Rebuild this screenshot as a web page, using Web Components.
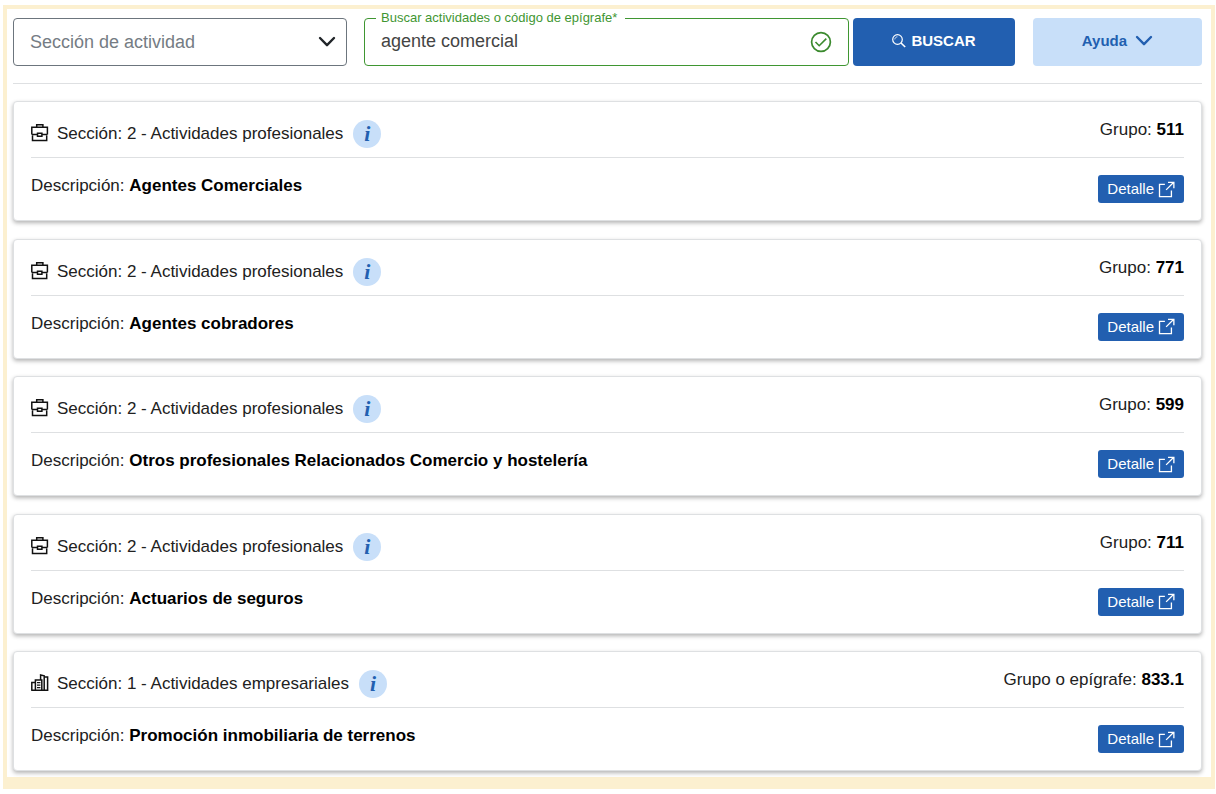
<!DOCTYPE html>
<html lang="es">
<head>
<meta charset="utf-8">
<title>Buscador de actividades</title>
<style>
  body { margin: 0; background: #fff; color: #212121; font: 17px/20px "Liberation Sans", Arial, sans-serif; }
</style>
</head>
<body>
<activity-finder>
  <search-bar slot="search"></search-bar>
  <activity-card kind="briefcase"><span slot="section">Sección: 2 - Actividades profesionales</span><span slot="label">Grupo:</span><b slot="group">511</b><b slot="description">Agentes Comerciales</b></activity-card>
  <activity-card kind="briefcase"><span slot="section">Sección: 2 - Actividades profesionales</span><span slot="label">Grupo:</span><b slot="group">771</b><b slot="description">Agentes cobradores</b></activity-card>
  <activity-card kind="briefcase"><span slot="section">Sección: 2 - Actividades profesionales</span><span slot="label">Grupo:</span><b slot="group">599</b><b slot="description">Otros profesionales Relacionados Comercio y hostelería</b></activity-card>
  <activity-card kind="briefcase"><span slot="section">Sección: 2 - Actividades profesionales</span><span slot="label">Grupo:</span><b slot="group">711</b><b slot="description">Actuarios de seguros</b></activity-card>
  <activity-card kind="buildings"><span slot="section">Sección: 1 - Actividades empresariales</span><span slot="label">Grupo o epígrafe:</span><b slot="group">833.1</b><b slot="description">Promoción inmobiliaria de terrenos</b></activity-card>
</activity-finder>

<script>
const ICONS = {
  briefcase: ['0 0 18 18', '<g fill="none" stroke="#111" stroke-width="1.5"><path d="M5.7 3V.8h6.2V3M.8 10.6V3.3h15.6v7.3M.8 10.6h5.4M11 10.6h5.4M1.5 11.5v4.9h14.2v-4.9"/><path d="M6.5 9.2h4.4v3H6.5z"/></g>'],
  buildings: ['0 0 18 18', '<g fill="none" stroke="#111" stroke-width="1.5"><path d="M.8 16.2V8.4h3M.2 16.2h17.2M4.4 16V5.9h6.4V16M9.6 5.8V1l3.6.8v14.4M13.2 2.9h3.4v13.3"/><path d="M6 8.6h3.4M6 11.1h3.4M6 13.6h3.4" stroke-width="1.3"/></g>'],
  external: ['0 0 18 18', '<path d="M7.3 3.6H1.6v12.9h12.6V10M8.6 9.4l7.8-7.8M10.6 1.4h6.2v6.3" fill="none" stroke="#fff" stroke-width="1.4"/>'],
  search: ['0 0 14 14', '<g fill="none" stroke="#fff"><circle cx="5.5" cy="5.5" r="4.8" stroke-width="1.2"/><path d="M2.8 5.4c.2-1.5 1.1-2.4 2.6-2.6" stroke-width=".8"/><path d="m9 9 4.2 4" stroke-width="1.6"/></g>'],
  check: ['0 0 22 22', '<g fill="none" stroke="#3b8a2e"><circle cx="11" cy="11" r="9.4" stroke-width="1.7"/><path d="m5.5 11 3.7 3.7 7.1-7.1" stroke-width="1.6"/></g>'],
  chevron: ['0 0 18 12', '<path d="m2 2 7 7.2L16 2" fill="none" stroke="currentColor" stroke-width="2.4" stroke-linecap="round" stroke-linejoin="round"/>']
};

class UiIcon extends HTMLElement {
  connectedCallback() {
    if (this.shadowRoot) return;
    const [box, art] = ICONS[this.getAttribute('name')];
    this.attachShadow({ mode: 'open' }).innerHTML = `
      <style>
        :host { display: block; flex: none; width: 18px; height: 18px; }
        svg { display: block; width: 100%; height: 100%; }
      </style>
      <svg viewBox="${box}" aria-hidden="true">${art}</svg>`;
  }
}

class SearchBar extends HTMLElement {
  constructor() {
    super();
    this.attachShadow({ mode: 'open' }).innerHTML = `
      <style>
        :host { display: block; border-bottom: 1px solid #dee0e2; padding-bottom: 17px; }
        form { display: grid; grid-template-columns: minmax(0, 347fr) minmax(0, 485fr) minmax(0, 162fr) minmax(0, 183fr); column-gap: 4px; }
        * { box-sizing: border-box; }
        .field { position: relative; height: 48px; }
        .section { margin-right: 13px; }
        select, input { width: 100%; height: 48px; margin: 0; padding: 0 16px; border: 1px solid #6c757d; border-radius: 4px; background: #fff; font: inherit; font-size: 18px; outline: 0; appearance: none; }
        select { color: #757c84; }
        input { color: #444; border-color: #3f9632; padding-right: 48px; padding-bottom: 2px; }
        label { position: absolute; left: 12px; top: -8px; padding: 0 8px 0 5px; background: #fff; color: #3f9632; font-size: 13px; line-height: 16px; white-space: nowrap; }
        .field ui-icon { position: absolute; pointer-events: none; }
        .section ui-icon { right: 11px; top: 18px; height: 12px; color: #212529; }
        .text ui-icon { right: 17px; top: 13px; width: 22px; height: 22px; }
        button { display: flex; align-items: center; justify-content: center; height: 48px; border: 0; border-radius: 4px; padding: 0 0 2px; font: bold 15px/20px "Liberation Sans", Arial, sans-serif; }
        .go { gap: 5px; background: #225fb0; color: #fff; }
        .go ui-icon { width: 14px; height: 14px; }
        .help { gap: 8px; margin-left: 14px; background: #c8dff9; color: #225fb0; }
        .help ui-icon { height: 12px; }
      </style>
      <form onsubmit="return false">
        <div class="field section">
          <select aria-label="Sección de actividad"><option>Sección de actividad</option></select>
          <ui-icon name="chevron"></ui-icon>
        </div>
        <div class="field text">
          <input id="query" type="text" value="agente comercial" required>
          <label for="query">Buscar actividades o código de epígrafe*</label>
          <ui-icon name="check"></ui-icon>
        </div>
        <button class="go" type="submit"><ui-icon name="search"></ui-icon>BUSCAR</button>
        <button class="help" type="button">Ayuda<ui-icon name="chevron"></ui-icon></button>
      </form>`;
  }
}

class ActivityCard extends HTMLElement {
  constructor() {
    super();
    this.attachShadow({ mode: 'open' });
  }
  connectedCallback() {
    this.shadowRoot.innerHTML = `
      <style>
        :host { display: block; padding: 0 17px; border: 1px solid #dee0e2; border-radius: 4px; background: #fff; box-shadow: 0 2px 4px rgba(0, 0, 0, .3); }
        header, .body { display: flex; justify-content: space-between; align-items: flex-start; }
        header { padding: 18px 0 9px; border-bottom: 1px solid #dee0e2; }
        .body { padding: 17px 0; }
        .section { display: flex; align-items: center; gap: 8px; }
        .description { line-height: 22px; }
        button { flex: none; border: 0; font: inherit; }
        .info { width: 28px; height: 28px; margin-left: 2px; padding: 0; border-radius: 50%; background: #c8dff9; color: #225fb0; font: italic bold 22px/28px "Liberation Serif", "Times New Roman", serif; }
        .detail { display: flex; align-items: center; gap: 4px; height: 28px; padding: 0 9px; border-radius: 3px; background: #225fb0; color: #fff; font-size: 15px; line-height: 20px; }
        ::slotted(b) { color: #000; }
        .section ui-icon { padding-bottom: 2px; }
        .detail ui-icon { width: 17px; height: 17px; }
      </style>
      <header>
        <div class="section">
          <ui-icon name="${this.getAttribute('kind')}"></ui-icon>
          <slot name="section"></slot>
          <button class="info" type="button">i</button>
        </div>
        <div><slot name="label"></slot> <slot name="group"></slot></div>
      </header>
      <div class="body">
        <div class="description">Descripción: <slot name="description"></slot></div>
        <button class="detail" type="button">Detalle<ui-icon name="external"></ui-icon></button>
      </div>`;
  }
}

class ActivityFinder extends HTMLElement {
  constructor() {
    super();
    this.attachShadow({ mode: 'open' }).innerHTML = `
      <style>
        :host { display: flow-root; }
        main { box-sizing: border-box; display: flex; flex-direction: column; gap: 17px; min-height: calc(100vh - 10px); margin: 5px 1px 5px 3px; padding: 9px 9px 6px 6px; border: 4px solid #fcf0d0; border-bottom-width: 12px; }
        .results { flex: 1; display: flex; flex-direction: column; justify-content: space-between; gap: 16px; }
      </style>
      <main>
        <slot name="search"></slot>
        <section class="results"><slot></slot></section>
      </main>`;
  }
}

customElements.define('ui-icon', UiIcon);
customElements.define('search-bar', SearchBar);
customElements.define('activity-card', ActivityCard);
customElements.define('activity-finder', ActivityFinder);
</script>
</body>
</html>
